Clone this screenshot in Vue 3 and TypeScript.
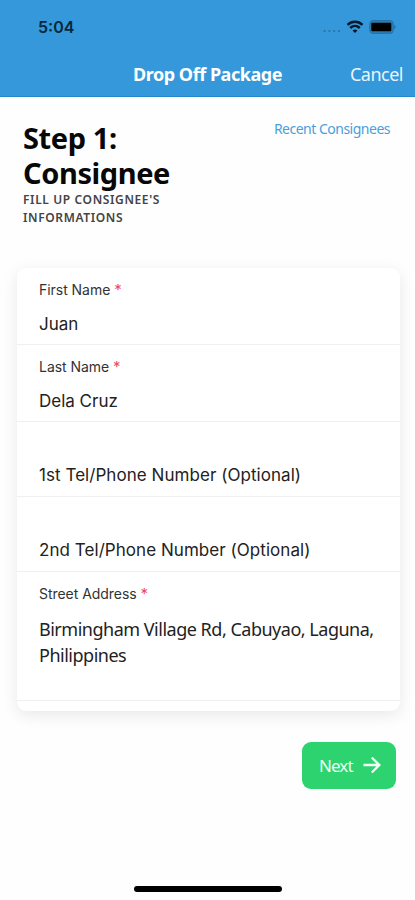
<script setup lang="ts">
interface Field {
  key: string
  label?: string
  value: string
}

const fields: Field[] = [
  { key: 'first', label: 'First Name', value: 'Juan' },
  { key: 'last', label: 'Last Name', value: 'Dela Cruz' },
  { key: 'tel1', value: '1st Tel/Phone Number (Optional)' },
  { key: 'tel2', value: '2nd Tel/Phone Number (Optional)' },
  { key: 'street', label: 'Street Address', value: 'Birmingham Village Rd, Cabuyao, Laguna, Philippines' },
]
</script>

<template>
  <div class="screen">
    <header class="header">
      <div class="status">
        <span class="time">5:04</span>
        <div class="indicators">
          <svg class="signal" width="20" height="4" viewBox="0 0 20 4">
            <circle cx="2.6" cy="2" r="1.1" />
            <circle cx="7.4" cy="2" r="1.1" />
            <circle cx="12.2" cy="2" r="1.1" />
            <circle cx="17" cy="2" r="1.1" />
          </svg>
          <svg class="wifi" width="18" height="14" viewBox="0 0 18 14">
            <path d="M1.5 4.8C5.8 .7 12.2 .7 16.5 4.8" />
            <path d="M4.2 8C7 5.4 11 5.4 13.8 8" />
            <path class="wifi-dot" d="M9 13L6.5 10.5Q9 8.4 11.5 10.5Z" />
          </svg>
          <svg class="battery" width="28" height="14" viewBox="0 0 28 14">
            <rect x=".7" y=".7" width="23.6" height="12.6" rx="3.6" class="shell" />
            <rect x="2.3" y="2.8" width="20" height="8.4" rx="1" />
            <path class="cap" d="M25.3 4.8Q28 7 25.3 9.2Z" />
          </svg>
        </div>
      </div>
      <nav class="nav">
        <h1 class="title">Drop Off Package</h1>
        <button class="cancel" type="button">Cancel</button>
      </nav>
    </header>

    <main class="main">
      <section class="intro">
        <div>
          <h2 class="step">Step 1:<br />Consignee</h2>
          <p class="hint">Fill up consignee's<br />informations</p>
        </div>
        <a class="recent">Recent Consignees</a>
      </section>

      <section class="card">
        <div v-for="f in fields" :key="f.key" class="field" :class="f.key">
          <div v-if="f.label" class="label">{{ f.label }} <span class="req">*</span></div>
          <div class="value">{{ f.value }}</div>
        </div>
      </section>

      <div class="actions">
        <button class="next" type="button">
          <span class="next-text">Next</span>
          <svg width="18" height="18" viewBox="0 0 18 18">
            <path d="M.5 9H16M8.8 1.5L16.3 9L8.8 16.5" />
          </svg>
        </button>
      </div>
    </main>
    <footer class="footer"><div class="home"></div></footer>
  </div>
</template>

<style>
body {
  background: #fff;
}
</style>

<style scoped>
.screen {
  display: flex;
  flex-direction: column;
  width: 415px;
  height: 900px;
  overflow: hidden;
  background: #fefefe;
  color: #111;
  font-family: "Noto Sans", sans-serif;
}
h1, h2, p {
  margin: 0;
}
button {
  border: 0;
  padding: 0;
  background: none;
  font-family: inherit;
}
.header {
  box-sizing: border-box;
  height: 97px;
  background: #3498db;
  border-bottom: 1px solid #2189d0;
}
.status {
  display: flex;
  justify-content: space-between;
  align-items: center;
  height: 53px;
  padding: 0 18px 0 38px;
}
.time {
  color: #08283c;
  font: 600 16px/20px Inter, sans-serif;
}
.indicators {
  display: flex;
  align-items: center;
}
.signal {
  margin: 8px 4px 0 0;
  fill: #2871a3;
}
.wifi {
  margin-right: 5px;
  fill: none;
  stroke: #041a29;
  stroke-width: 2.5;
}
.wifi-dot {
  fill: #041a29;
  stroke: none;
}
.shell {
  fill: #2b7db5;
  stroke: #2874a8;
  stroke-width: 1.2;
}
.cap {
  fill: #23689a;
}
.nav {
  display: grid;
  grid-template-columns: 1fr auto 1fr;
  align-items: center;
  height: 42px;
  padding-right: 12px;
  padding-left: 12px;
  color: #fff;
}
.title {
  grid-column: 2;
  font-size: 18px;
  line-height: 24px;
  font-weight: 700;
  letter-spacing: -0.46px;
}
.cancel {
  justify-self: end;
  color: #e9f5fd;
  font-size: 18px;
  line-height: 24px;
  letter-spacing: -0.5px;
}
.intro {
  display: flex;
  justify-content: space-between;
  align-items: flex-start;
  height: 171px;
  box-sizing: border-box;
  padding: 23px 25px 0 23px;
}
.step {
  color: #080808;
  font-size: 29px;
  line-height: 35px;
  font-weight: 700;
  letter-spacing: -0.4px;
}
.hint {
  color: #444;
  font-size: 12px;
  line-height: 18px;
  font-weight: 600;
  letter-spacing: 0.62px;
  text-transform: uppercase;
  margin-top: 1px;
}
.recent {
  color: #4a9edc;
  font-size: 14px;
  line-height: 18px;
  letter-spacing: -0.5px;
}
.card {
  box-sizing: border-box;
  width: 383px;
  height: 443px;
  margin-left: 17px;
  overflow: hidden;
  border-radius: 9px;
  background: #fff;
  box-shadow: 0 4px 16px rgba(0, 0, 0, 0.09);
}
.field {
  box-sizing: border-box;
  height: 75px;
  padding: 0 22px;
  border-bottom: 1px solid #f0f0f0;
  font-family: Inter, sans-serif;
}
.first, .last {
  height: 77px;
}
.label {
  padding-top: 12px;
  color: #333;
  font-size: 14px;
  line-height: 20px;
  letter-spacing: -0.04px;
}
.req {
  color: #f0495c;
  font-size: 15px;
  line-height: 16px;
}
.value {
  padding-top: 12px;
  color: #222;
  font-size: 17px;
  line-height: 24px;
}
.tel1 .value, .tel2 .value {
  padding-top: 41px;
  letter-spacing: 0.05px;
}
.street {
  height: 129px;
}
.street .value {
  padding-top: 12px;
  margin-right: -10px;
  font-family: "Noto Sans", sans-serif;
  font-size: 18px;
  line-height: 26px;
  letter-spacing: -0.49px;
}
.actions {
  display: flex;
  justify-content: flex-end;
  padding: 31px 19px 0 0;
}
.next {
  display: flex;
  align-items: center;
  justify-content: space-between;
  box-sizing: border-box;
  width: 94px;
  height: 47px;
  padding: 0 15px 1px 17px;
  border-radius: 9px;
  background: #2dd36f;
  color: #e8fff1;
  font-size: 17px;
  letter-spacing: -0.9px;
}
.next path {
  fill: none;
  stroke: #effff5;
  stroke-width: 2.4;
}
.footer {
  display: flex;
  justify-content: center;
  margin-top: auto;
  padding-bottom: 8px;
}
.home {
  width: 148px;
  height: 6px;
  border-radius: 3px;
  background: #000;
}
</style>
